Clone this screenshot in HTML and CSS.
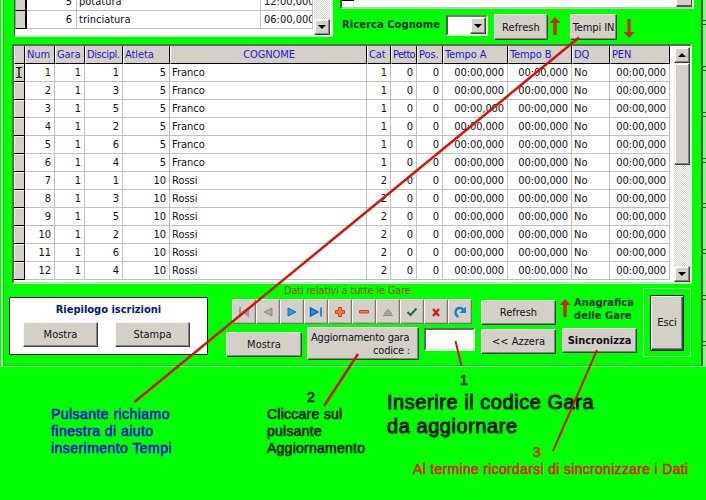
FILE: index.html
```
<!DOCTYPE html>
<html lang="it">
<head>
<meta charset="utf-8">
<title>Gare</title>
<link rel="stylesheet" href="styles.css">
</head>
<body>
<div class="window">
  <section class="top">
    <div class="disciplines">
      <div class="mini-rows">
        <div class="mini-row"><i></i><span class="n">5</span><span>potatura</span><span>12:00,000</span></div>
        <div class="mini-row"><i></i><span class="n">6</span><span>trinciatura</span><span>06:00,000</span></div>
      </div>
      <div class="scroll"><div class="track"></div><div class="sbtn"><b class="down"></b></div></div>
    </div>
    <div class="top-right">
      <div class="sheet"><div class="row-end"></div><div class="corner"></div></div>
      <div class="search">
        <span class="search-label">Ricerca Cognome</span>
        <div class="combo"><div class="sbtn"><b class="down"></b></div></div>
        <button class="btn refresh-top">Refresh</button>
        <svg class="arrow" width="12" height="20" viewBox="0 0 12 20"><path d="M6 1L11.500 7H7.700V19H4.300V7H.5Z"/></svg>
        <button class="btn tempi">Tempi IN</button>
        <svg class="arrow arrow-down" width="12" height="20" viewBox="0 0 12 20"><path d="M6 19L11.500 13H7.500V0H4.500V13H.5Z"/></svg>
      </div>
    </div>
  </section>

  <section class="entries">
    <div class="grid" id="grid"></div>
    <div class="scroll big"><div class="sbtn"><b class="up"></b></div><div class="thumb"></div><div class="track"></div><div class="sbtn"><b class="down"></b></div></div>
  </section>

  <section class="bottom">
    <div class="summary">
      <h2>Riepilogo iscrizioni</h2>
      <div class="summary-buttons"><button class="btn">Mostra</button><button class="btn">Stampa</button></div>
    </div>
    <div class="nav-area">
      <div class="nav-title">Dati relativi a tutte le Gare</div>
      <div class="navigator">
        <button><svg viewBox="0 0 16 16"><path fill="#999" d="M3 3H5V13H3ZM13 3V13L5 8Z"/></svg></button>
        <button><svg viewBox="0 0 16 16"><path fill="#aaa" stroke="#888" d="M12 4V12L4 8Z"/></svg></button>
        <button><svg viewBox="0 0 16 16"><path fill="#2999ee" stroke="#0867cf" d="M4 4V12L12 8Z"/></svg></button>
        <button><svg viewBox="0 0 16 16"><path fill="#2999ee" stroke="#0867cf" stroke-width="1.500" d="M2.500 4V12L10 8ZM13 3.500V12.500"/></svg></button>
        <button><svg viewBox="0 0 16 16"><path fill="#ff7838" stroke="#d54410" d="M6.500 3.500H9.500V6.500H12.500V9.500H9.500V12.500H6.500V9.500H3.500V6.500H6.500Z"/></svg></button>
        <button><svg viewBox="0 0 16 16"><path fill="#ff7838" stroke="#d54410" d="M3.500 6.500H12.500V9H3.500Z"/></svg></button>
        <button><svg viewBox="0 0 16 16"><path fill="#aaa" stroke="#888" d="M4 10L8 5.500L12 10ZM3 11.500H13"/></svg></button>
        <button><svg viewBox="0 0 16 16"><path fill="none" stroke="#087332" stroke-width="2" d="M3.500 8L6.500 11L12.500 4.500"/></svg></button>
        <button><svg viewBox="0 0 16 16"><path fill="none" stroke="#d61808" stroke-width="2.300" d="M5 5L11 12M11 5L5 12"/></svg></button>
        <button><svg viewBox="0 0 16 16"><path fill="none" stroke="#1680cf" stroke-width="2.400" d="M6.500 13C1.500 10 3.500 3.500 8 4Q10.500 4 12 7"/><path fill="#1680cf" d="M14 2.500V9H7.500Z"/></svg></button>
      </div>
      <div class="update">
        <button class="btn show">Mostra</button>
        <button class="btn update-btn"><span>Aggiornamento gara</span><span class="code">codice :</span></button>
        <div class="code-input"></div>
      </div>
    </div>
    <div class="actions">
      <button class="btn">Refresh</button>
      <button class="btn">&lt;&lt; Azzera</button>
    </div>
    <div class="registry">
      <div class="registry-title">
        <svg class="arrow" width="12" height="20" viewBox="0 0 12 20"><path d="M6 1L11.500 7H7.700V19H4.300V7H.5Z"/></svg>
        <div><span>Anagrafica</span><br><span class="l2">delle Gare</span></div>
      </div>
      <button class="btn sync">Sincronizza</button>
    </div>
    <div class="exit-frame"><button class="btn exit">Esci</button></div>
  </section>
  <div class="behind"><i></i><i></i><i></i><i></i><i></i><i></i><i></i><i></i></div>
</div>

<div class="note help">Pulsante richiamo<br>finestra di aiuto<br>inserimento Tempi</div>
<div class="note two">2</div>
<div class="note click">Cliccare sul<br>pulsante<br>Aggiornamento</div>
<div class="note one">1</div>
<div class="note insert"><span>Inserire il codice Gara</span><br>da aggiornare</div>
<div class="note three">3</div>
<div class="note finish">Al termine ricordarsi di sincronizzare i Dati</div>
<svg class="pointers" width="706" height="500" viewBox="0 0 706 500">
  <path class="thick" d="M579 37.500L134.500 402"/>
  <path class="thick" d="M358 354L324 406"/>
  <path d="M455.500 341L461.500 366"/>
  <path d="M597 350L553 451"/>
</svg>
<script src="grid.js"></script>
</body>
</html>
```
FILE: grid.js
```
const heads = ["", "Num", "Gara", "Discipl.", "Atleta", "COGNOME", "Cat", "Petto", "Pos.", "Tempo A", "Tempo B", "DQ", "PEN"];
const disciplines = [1, 3, 5, 2, 6, 4, 1, 3, 5, 2, 6, 4];
const T = "00:00,000";
const grid = document.getElementById("grid");

function addCell(text, name) {
  const cell = document.createElement("div");
  cell.className = name;
  cell.textContent = text;
  grid.appendChild(cell);
  return cell;
}

heads.forEach((h, i) => addCell(h, "head c" + i));
disciplines.forEach((d, i) => {
  const first = i < 6;
  const marker = addCell("", "mark");
  if (i === 0) {
    marker.innerHTML = '<svg width="8" height="13" viewBox="0 0 8 13"><path d="M1 1.500H3L4 2.500L5 1.500H7M1 11.500H3L4 10.500L5 11.500H7M4 2V11" fill="none" stroke="#000" stroke-width="1.200"/></svg>';
  }
  [i + 1, 1, d, first ? 5 : 10, first ? "Franco" : "Rossi", first ? 1 : 2, 0, 0, T, T, "No", T]
    .forEach((v, k) => addCell(v, "cell c" + (k + 1)));
});
```
FILE: styles.css
```
* { box-sizing: border-box; }
body {
  margin: 0;
  width: 706px;
  height: 500px;
  overflow: hidden;
  position: relative;
  background: #00ff00;
  font-family: "DejaVu Sans Condensed", "DejaVu Sans", sans-serif;
  font-stretch: condensed;
  font-size: 11px;
  color: #101018;
}
.window {
  position: relative;
  width: 706px;
  height: 367px;
  border-bottom: 1px solid #84f284;
  box-shadow: inset 0 -1px #41a941;
}
.window::before { content: ""; position: absolute; left: 1px; top: 0; width: 2px; height: 366px; background: #9cf79c; border-right: 1px solid #35b435; }

.top { display: flex; height: 44px; padding-left: 14px; }
.disciplines { display: flex; width: 319px; height: 37px; background: #fff; border-left: 1px solid #555; border-right: 2px solid #e6e6dc; border-bottom: 1px solid #c8e8c0; overflow: hidden; }
.mini-rows { width: 299px; margin-top: -7px; }
.mini-row { display: grid; grid-template-columns: 12px 50px 184px 52px; height: 18px; line-height: 18px; }
.mini-row i { background: #d4d0c8; border-right: 2px solid #000; border-bottom: 1px solid #000; border-left: 1px solid #999; }
.mini-row span { border-right: 1px solid #c0c0c0; border-bottom: 1px solid #c0c0c0; padding-left: 2px; overflow: hidden; white-space: nowrap; }
.mini-row .n { text-align: right; padding-right: 4px; }
.mini-row span:last-child { padding-left: 3px; }

.scroll { width: 16px; display: flex; flex-direction: column; }
.track { flex: 1; background: repeating-conic-gradient(#fff 0 25%, #d4d0c8 0 50%) 0 0 / 2px 2px; }
.sbtn, .thumb { background: #d4d0c8; border: 1px solid; border-color: #f4f2ee #404040 #404040 #f4f2ee; box-shadow: inset -1px -1px #858585, inset 1px 1px #fff; }
.sbtn { height: 16px; width: 16px; flex: none; display: flex; align-items: center; justify-content: center; }
.sbtn b { border: 4px solid transparent; width: 0; height: 0; }
.sbtn .down { border-top-color: #000; border-bottom: 0; }
.sbtn .up { border-bottom-color: #000; border-top: 0; }
.disciplines .scroll { height: 35px; }

.top-right { margin-left: 7px; width: 354px; }
.sheet { height: 9px; background: #fff; border-left: 2px solid #555; border-right: 2px solid #e8e8e0; border-bottom: 2px solid #bfc8b8; display: flex; justify-content: space-between; }
.row-end { width: 12px; height: 1px; background: #000; }
.corner { width: 16px; height: 7px; background: #d4d0c8; border-bottom: 2px solid #555; border-right: 1px solid #555; border-left: 1px solid #fff; }
.search { display: flex; align-items: flex-start; height: 35px; }
.search > * { flex: none; }
.search-label { width: 106px; padding: 9px 0 0 2px; white-space: nowrap; font-weight: bold; letter-spacing: .1px; color: #002850; }
.combo { width: 42px; height: 21px; margin-top: 6px; background: #fff; border: 2px solid; border-color: #777 #ece9df #ece9df #555; display: flex; justify-content: flex-end; }
.combo .sbtn { height: 17px; }

button { font: inherit; color: inherit; margin: 0; padding: 0; }
.btn { background: #d4d0c8; border: 1px solid; border-color: #f8f6f0 #404040 #404040 #f8f6f0; box-shadow: inset -1px -1px #858585; white-space: nowrap; display: block; }
.refresh-top { width: 54px; height: 26px; margin: 14px 0 0 6px; margin-top: 5px; letter-spacing: .1px; }
.arrow { fill: #d52222; display: block; }
.search > .arrow { margin: 7px 0 0 1px; }
.tempi { width: 47px; height: 26px; margin: 5px 0 0 9px; letter-spacing: -.1px; }
.search > .arrow-down { margin: 10px 0 0 6px; }

.entries { display: flex; margin-left: 12px; width: 680px; height: 240px; background: #fff; border: 2px solid; border-color: #5a6a5a #e8f0e0 #c8e8c0 #5a6a5a; }
.grid { display: grid; grid-template-columns: 11px 30px 30px 38px 47px 197px 24px 26px 26px 65px 64px 38px 60px; grid-template-rows: 18px; grid-auto-rows: 18px; width: 660px; flex: none; }
.head { background: #d4d0c8; color: #1c18d8; border-right: 1px solid #000; border-bottom: 1px solid #000; border-left: 1px solid #fff; overflow: hidden; white-space: nowrap; line-height: 18px; padding-left: 1px; letter-spacing: -.1px; }
.head.c3 { letter-spacing: -.4px; }
.head.c7 { letter-spacing: -.7px; }
.head.c5 { text-align: center; }
.cell { border-right: 1px solid #c0c0c0; border-bottom: 1px solid #c0c0c0; line-height: 18px; text-align: right; padding-right: 3px; overflow: hidden; white-space: nowrap; }
.cell.c5, .cell.c11 { text-align: left; padding-left: 2px; }
.cell.c9, .cell.c10, .cell.c12 { letter-spacing: -.1px; }
.mark { background: #d4d0c8; border-right: 1px solid #000; border-bottom: 1px solid #000; box-shadow: inset 1px 1px #f4f4f0; display: flex; justify-content: center; align-items: center; }
.scroll.big { margin: 1px 0 0; height: 235px; }
.thumb { height: 102px; }

.bottom { display: flex; height: 82px; }
.summary { width: 199px; height: 58px; margin: 13px 0 0 9px; background: #fff; border: 1px solid #101010; }
.summary h2 { margin: 4px 0 0; text-align: center; font-size: 11px; line-height: 15px; color: #001878; }
.summary-buttons { display: flex; gap: 17px; padding: 5px 0 0 13px; }
.summary-buttons .btn { width: 75px; height: 25px; }
.nav-area { margin-left: 17px; width: 250px; }
.nav-title { height: 15px; line-height: 14px; margin-left: 59px; color: #a84800; white-space: nowrap; letter-spacing: -.2px; }
.navigator { display: flex; margin-left: 7px; width: 240px; }
.navigator button { width: 24px; height: 25px; display: flex; align-items: center; justify-content: center; background: #d4d0c8; border: 1px solid; border-color: #f8f6f0 #777 #777 #f8f6f0; box-shadow: inset -1px -1px #b8b4ac; }
.navigator svg { width: 16px; height: 16px; flex: none; }
.update { display: flex; margin-top: 3px; }
.show { width: 76px; height: 25px; margin: 5px 0 0 1px; }
.update-btn { width: 112px; height: 33px; margin-left: 5px; line-height: 13px; letter-spacing: -.2px; }
.update-btn span { display: block; text-align: left; padding-left: 3px; }
.update-btn .code { text-align: right; padding-right: 8px; }
.code-input { width: 51px; height: 23px; margin: 1px 0 0 5px; background: #fff; border: 2px solid; border-color: #667 #e8e8e0 #e8e8e0 #667; }
.actions { width: 75px; margin: 16px 0 0 6px; display: flex; flex-direction: column; gap: 4px; }
.actions .btn { height: 25px; }
.registry { margin-left: 6px; width: 76px; }
.registry-title { display: flex; height: 40px; margin-left: -3px; padding-top: 12px; font-weight: bold; line-height: 13px; color: #003048; white-space: nowrap; }
.registry-title .arrow { margin-top: 2px; margin-right: 3px; flex: none; }
.registry-title .l2 { letter-spacing: .05px; }
.sync { width: 75px; height: 25px; margin-top: 4px; font-weight: bold; }
.exit-frame { width: 48px; height: 69px; margin: 4px 0 0 5px; border: 1px solid #a8f2a0; display: flex; justify-content: center; align-items: center; }
.exit { width: 34px; height: 56px; border-color: #202020; box-shadow: inset 1px 1px #fff, inset -1px -1px #444, inset -2px -2px #858585; }

.behind { position: absolute; right: 0; top: 0; width: 5px; height: 366px; background: #8df08d; border-left: 2px solid #47604a; display: flex; flex-direction: column; justify-content: space-around; align-items: flex-end; }
.behind i { width: 3px; height: 5px; border-top: 1px solid #266026; border-bottom: 1px solid #266026; }

.note { position: absolute; font-family: "Liberation Sans", Arial, sans-serif; font-size: 14px; line-height: 17px; white-space: nowrap; color: #001400; -webkit-text-stroke: .6px currentColor; }
.help { left: 51px; top: 406px; color: #0010d0; letter-spacing: .45px; }
.two { left: 307px; top: 389px; }
.click { left: 267px; top: 406px; letter-spacing: .25px; }
.one { left: 460px; top: 372px; }
.insert { left: 387px; top: 390px; font-size: 20px; line-height: 24px; letter-spacing: .55px; -webkit-text-stroke-width: .9px; }
.three { left: 533px; top: 444px; color: #c83000; }
.finish { left: 413px; top: 461px; color: #d82800; letter-spacing: .31px; }
.pointers { position: absolute; left: 0; top: 0; pointer-events: none; fill: none; stroke: #d41408; stroke-width: 2; }
.pointers .thick { stroke-width: 2.500; }
```
